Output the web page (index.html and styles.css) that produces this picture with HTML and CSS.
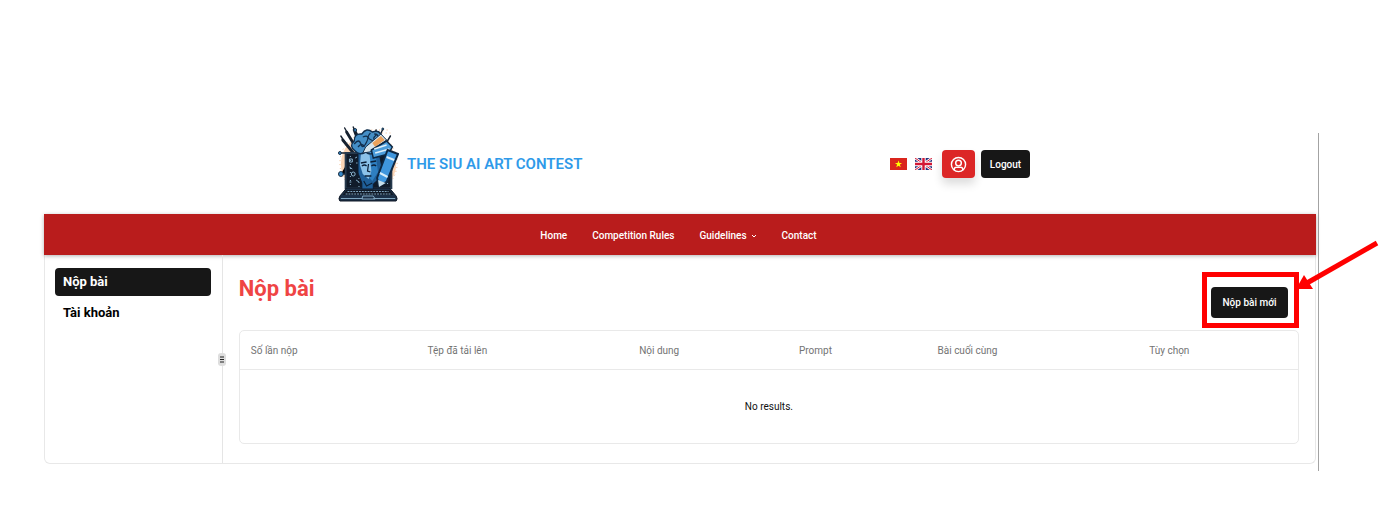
FILE: index.html
```html
<!DOCTYPE html>
<html lang="vi">
<head>
<meta charset="utf-8">
<title>The SIU AI Art Contest</title>
<link rel="stylesheet" href="styles.css">
</head>
<body>
<div class="page">
  <header class="header">
    <div class="header-inner">
      <a class="brand" href="#">
        <svg class="logo" viewBox="0 0 64 76" preserveAspectRatio="none" aria-hidden="true">
          <circle cx="32" cy="38" r="29" fill="#fbd5b5"/>
          <g fill="none" stroke="#f0b98c" stroke-dasharray="1 3"><circle cx="32" cy="37" r="30"/><path d="M35 4h20M38 7h18"/></g>
          <g stroke="#16212f" stroke-linecap="round"><path stroke-width="3" d="M5 14l12 14M9 6l12 19M17 4l7 18"/><path stroke-width="1.5" d="M3 10l4 6M7 2l4 7M16 1l2 5M18 4l5 9M47 3l-5 11M40 4l-2 8M55 10l-5 8M2 27h7M3 48h5v-8"/></g>
          <path d="M8 27h48v35H8z" fill="#101b2a" stroke="#26394d" stroke-width="2"/>
          <path d="M2 75q-2-2 0-5l7-8h45l7 8q2 3 0 5z" fill="#1c3047" stroke="#0c1623"/>
          <path d="M9 64h45l4 5H5z" fill="#101925"/>
          <g fill="none" stroke="#83a9c4"><path stroke-dasharray="2 1" d="M10 65.500h43M8 68h48"/><path d="M3 72.500h23m11 0h23M26 70h11l2 3H25z"/></g>
          <g fill="none" stroke="#8eb8d4" stroke-width="1"><circle cx="16" cy="48" r="2"/><path d="M12 33h3v3h-3zM19 37h2M12 41l3 2M19 54l3 2M12 56h2M18 32l2-1"/><path stroke-dasharray="1 3" d="M13 30v30M22 32v29M48 53v8M52 53v8"/></g>
          <path d="M21 26q9-8 22 0l3 15-3 12-6 5v5H25v-6l-4-10z" fill="#1f5f99" stroke="#0c1c30"/>
          <path d="M24 28l11-3 1 21-4 7-6-5-3-9z" fill="#8bc2e9"/><path d="M33 28l7 4 2 14-6 9-3-3 2-7z" fill="#2e7fc1"/>
          <path d="M24 37l6-1m4 0l6-1M25 40q3-2 5 0m5 0q3-2 5 0M32 38l-1 7 3 1M28 50h7M27 55l3 5 6-3" fill="none" stroke="#0b2038" stroke-width="1.300"/>
          <path d="M18 25q-7-5-1-10 0-8 8-7 5-7 11-2 8-3 10 5 7 4 2 10-1 7-9 5-5 4-10 0-7 4-11-1z" fill="#448fc7" stroke="#102e4c" stroke-width="1.500"/>
          <path d="M17 18q5-6 7 0t6-2-4-5m8-4q-5 5 1 7t0 6-7 4m12-15q-5 4 0 6t-2 7m-17-1q4-5 7 0m10-13q5 0 4 5" fill="none" stroke="#122f4d" stroke-width="1.300"/>
          <path d="M29 21l16-13 6 6-18 12-7 1z" fill="#d8e6ed" stroke="#17304b"/><path d="M36 17l9-7 4 4-10 7z" fill="#eaa15b"/>
          <path d="M35 24l16-9 6 6-4 7-16 4z" fill="#4b9cda" stroke="#0d2742" stroke-width="1.500"/><path d="M38 23l13-4M39 27l15-4" stroke="#e0eff8" stroke-width="1.500"/>
          <path d="M52 24l11 4-12 28-8 4-2-8z" fill="#3f96dd" stroke="#0d2742" stroke-width="2"/><path d="M51 31l8 3M44 47l8 4" stroke="#d8edf9" stroke-width="2"/>
          <path d="M42 54l8 3-7 4z" fill="#c6dfec"/>
          <g fill="#3889c8" stroke="#182d42"><circle cx="2" cy="27" r="1.500"/><circle cx="3" cy="48" r="2.500"/><circle cx="18" cy="4" r="1.500"/><circle cx="47" cy="3" r="1"/></g>
        </svg>
        <span>THE SIU AI ART CONTEST</span>
      </a>
      <div class="actions">
        <button class="flag" aria-label="Tiếng Việt"><svg viewBox="0 0 17 12"><path fill="#da251d" d="M0 0h17v12H0z"/><path fill="#ff0" d="M8.500 2.500l.9 2.500h2.700L9.900 6.600l.8 2.700-2.200-1.600-2.200 1.600.8-2.700L4.900 5h2.700z"/></svg></button>
        <button class="flag" aria-label="English"><svg viewBox="0 0 17 12"><path fill="#24327d" d="M0 0h17v12H0z"/><path stroke="#fff" stroke-width="2.600" d="M0 0l17 12M17 0L0 12"/><path stroke="#d31735" stroke-width="1" d="M0 0l17 12M17 0L0 12"/><path stroke="#fff" stroke-width="4.400" d="M8.500 0v12M0 6h17"/><path stroke="#d31735" stroke-width="2.400" d="M8.500 0v12M0 6h17"/></svg></button>
        <button class="user" aria-label="Tài khoản"><svg viewBox="0 0 24 24"><circle cx="12" cy="12" r="10"/><circle cx="12" cy="10" r="4"/><path d="M6 20v-1.500a3 3 0 0 1 3-2.500h6a3 3 0 0 1 3 2.500V20"/></svg></button>
        <button class="btn logout">Logout</button>
      </div>
    </div>
  </header>
  <nav class="nav">
    <a href="#">Home</a>
    <a href="#">Competition Rules</a>
    <a href="#" class="has-menu">Guidelines <svg viewBox="0 0 6 6" aria-hidden="true"><path d="M1 2l2 2 2-2"/></svg></a>
    <a href="#">Contact</a>
  </nav>
  <div class="panel">
    <aside class="sidebar">
      <a class="side-link active" href="#">Nộp bài</a>
      <a class="side-link" href="#">Tài khoản</a>
      <span class="handle"><svg viewBox="0 0 4 7" aria-hidden="true"><path d="M0 1h4M0 3.500h4M0 6h4"/></svg></span>
    </aside>
    <main class="main">
      <div class="main-head">
        <h1>Nộp bài</h1>
        <div class="callout">
          <button class="btn submit">Nộp bài mới</button>
          <span class="callout-box"></span>
          <svg class="callout-arrow" viewBox="0 0 84 52" aria-hidden="true"><path d="M82 3L12 43" stroke="#f00" stroke-width="5"/><path d="M1 49l8-14 9 14z" fill="#f00"/></svg>
        </div>
      </div>
      <div class="table-box">
        <table>
          <colgroup><col class="c-count"><col class="c-file"><col class="c-body"><col class="c-prompt"><col class="c-last"><col class="c-body"></colgroup>
          <thead><tr><th>Số lần nộp</th><th>Tệp đã tải lên</th><th>Nội dung</th><th>Prompt</th><th>Bài cuối cùng</th><th>Tùy chọn</th></tr></thead>
          <tbody><tr><td colspan="6">No results.</td></tr></tbody>
        </table>
      </div>
    </main>
  </div>
</div>
</body>
</html>
```
FILE: styles.css
```css
* { box-sizing: border-box; }
body {
  margin: 0;
  background: #fff;
  color: #111;
  font-family: Roboto, "Noto Sans", sans-serif;
  font-size: 10px;
}
a { color: inherit; text-decoration: none; }
button { font: inherit; border: 0; padding: 0; cursor: pointer; }
.page {
  margin: 133px 73px 0 44px;
  padding: 0 2px 7px 0;
  border-right: 1px solid #a3a3a3;
}
.header { display: flex; justify-content: center; height: 81px; padding-left: 8px; }
.header-inner {
  display: flex;
  align-items: center;
  justify-content: space-between;
  width: 692px;
  height: 62px;
}
.brand {
  display: flex;
  align-items: center;
  gap: 8px;
  color: #2f9ae9;
  font-size: 15px;
  font-weight: 600;
}
.logo { width: 61px; height: 76px; }
.actions { display: flex; align-items: center; }
.flag { background: none; width: 17px; height: 12px; margin-right: 8px; display: flex; }
.flag svg { width: 17px; height: 12px; }
.user {
  display: flex;
  align-items: center;
  justify-content: center;
  width: 33px;
  height: 28px;
  margin: 0 6px 0 2px;
  border-radius: 4px;
  background: #dc2626;
  box-shadow: 0 6px 10px rgba(0, 0, 0, .14);
}
.user svg { width: 17px; height: 17px; fill: none; stroke: #fff; stroke-width: 2; }
.btn { background: #171717; color: #fff; border-radius: 4px; font-weight: 500; }
.logout { width: 49px; height: 28px; }
.nav {
  position: relative;
  display: flex;
  align-items: center;
  justify-content: center;
  gap: 25px;
  height: 41px;
  padding: 2px 3px 0 0;
  background: #b91c1c;
  color: #fff;
  font-weight: 500;
  box-shadow: 0 1px 4px rgba(0, 0, 0, .3);
}
.has-menu { display: flex; align-items: center; gap: 4px; }
.has-menu svg { width: 6px; height: 6px; fill: none; stroke: #fff; }
.panel {
  display: flex;
  min-height: 209px;
  border: 1px solid #e8e8e8;
  border-top: 0;
  border-radius: 0 0 6px 6px;
}
.sidebar {
  position: relative;
  display: flex;
  flex-direction: column;
  gap: 3px;
  width: 14%;
  padding: 13px 11px 0 10px;
  border-right: 1px solid #e5e5e5;
}
.side-link { padding: 0 8px; line-height: 28px; border-radius: 4px; font-size: 13px; font-weight: 700; color: #000; }
.side-link.active { background: #171717; color: #fff; }
.handle {
  position: absolute;
  right: -4px;
  top: 98px;
  display: flex;
  align-items: center;
  justify-content: center;
  width: 8px;
  height: 13px;
  border-radius: 3px;
  background: #dedede;
}
.handle svg { width: 4px; height: 7px; stroke: #222; }
.main { flex: 1; padding: 17px 16px 18px; }
.main-head { display: flex; justify-content: space-between; height: 58px; }
h1 { margin: 0; color: #ef4444; font-size: 22px; line-height: 34px; font-weight: 700; }
.callout { position: relative; align-self: flex-start; margin: 15px 11px 0 0; }
.submit { display: block; width: 77px; height: 31px; }
.callout-box { position: absolute; inset: -15px -11px -10px -9px; border: 5px solid #f00; pointer-events: none; }
.callout-arrow { position: absolute; left: 84px; top: -47px; width: 84px; height: 52px; pointer-events: none; }
.table-box { border: 1px solid #e9e9e9; border-radius: 5px; }
table { width: 100%; table-layout: fixed; border-collapse: collapse; }
.c-count { width: 16.7%; }
.c-file { width: 20%; }
.c-body { width: 15.1%; }
.c-prompt { width: 13.1%; }
.c-last { width: 20%; }
th { height: 38px; padding: 2px 11px 0; text-align: left; font-weight: 400; color: #737373; border-bottom: 1px solid #e9e9e9; }
td { height: 74px; padding: 0; text-align: center; }
```
